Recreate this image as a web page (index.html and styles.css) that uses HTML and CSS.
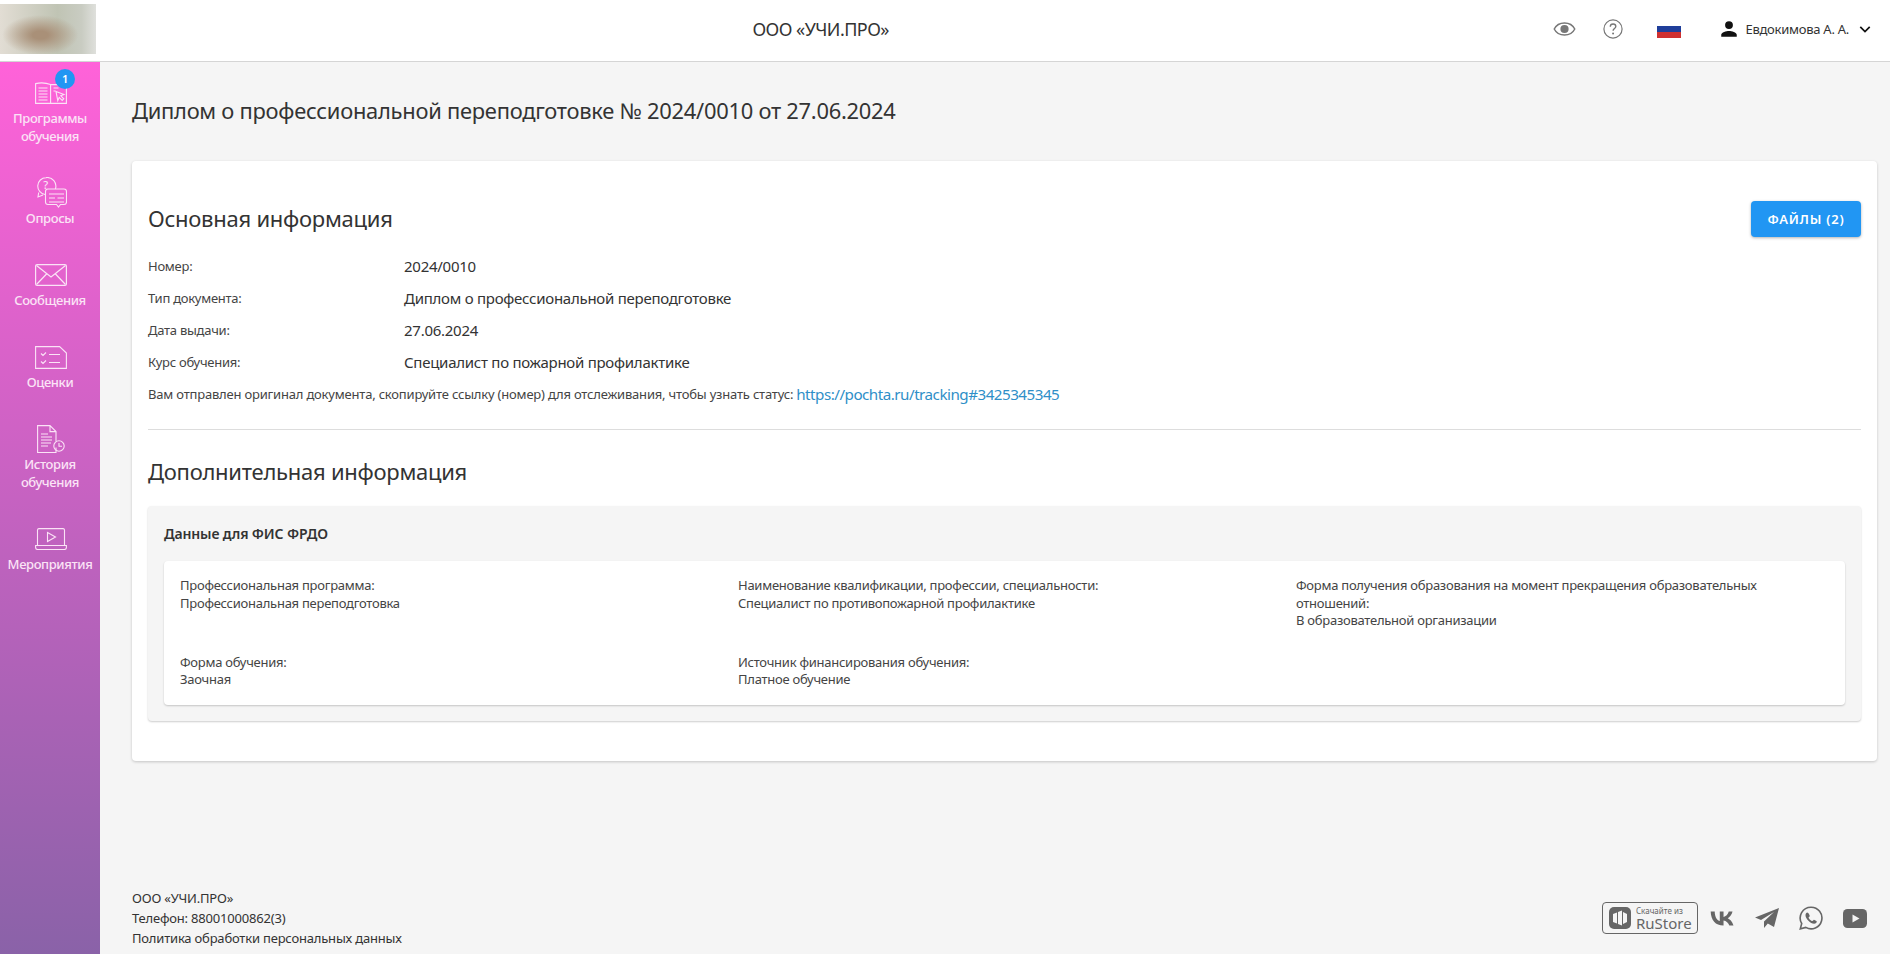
FILE: index.html
```html
<!DOCTYPE html>
<html lang="ru">
<head>
    <meta charset="UTF-8">
    <title>Диплом о профессиональной переподготовке</title>
    <link rel="stylesheet" href="styles.css">
</head>
<body>
    <header class="topbar">
        <div class="logo"></div>
        <div class="org-name">ООО «УЧИ.ПРО»</div>
        <div class="top-actions">
            <svg class="top-eye" viewBox="0 0 24 15" width="23" height="14"><path d="M12 1C7 1 3 3.500 1 7.500c2 4 6 6.500 11 6.500s9-2.500 11-6.500C21 3.500 17 1 12 1z" fill="none" stroke="#777" stroke-width="1.600"/><circle cx="12" cy="7.500" r="4.400" fill="#777"/></svg>
            <svg class="top-help" viewBox="0 0 22 22" width="20" height="20"><circle cx="11" cy="11" r="10" fill="none" stroke="#777" stroke-width="1.300"/><path d="M8 8.500c0-1.800 1.400-3 3.100-3s3 1.100 3 2.700c0 2.300-3 2.400-3 4.800" fill="none" stroke="#777" stroke-width="1.500"/><circle cx="11.100" cy="15.900" r="1.100" fill="#777"/></svg>
            <div class="flag"><span class="flag-white"></span><span class="flag-blue"></span><span class="flag-red"></span></div>
            <div class="user">
                <svg viewBox="0 0 24 24" width="20" height="20"><path d="M12 12a4.700 4.700 0 1 0 0-9.400 4.700 4.700 0 0 0 0 9.400zm0 2.300c-3.200 0-9.300 1.600-9.300 4.700v2.400h18.600V19c0-3.100-6.100-4.700-9.300-4.700z" fill="#111"/></svg>
                <span>Евдокимова А. А.</span>
                <svg viewBox="0 0 14 10" width="12" height="9"><path d="M1.500 2l5.500 5.500L12.500 2" fill="none" stroke="#111" stroke-width="2"/></svg>
            </div>
        </div>
    </header>

    <div class="layout">
        <nav class="sidebar">
            <a class="nav-item">
                <span class="nav-icon">
                    <svg viewBox="0 0 32 22" width="32" height="22"><g fill="none" stroke="#fbe3f6" stroke-width="1.100"><path d="M.6 1.600c5-1.200 10-1 15 1V21.400H.6zM15.600 2.600h15.800v18.800H15.600z"/><path d="M3.500 6h9M3.500 9h9M3.500 12h9M3.500 15h9M3.500 18h9M18.500 6h5M18.500 9h2"/><path d="M21 9.500l8 3-3.200 1.300 3 3-1.600 1.600-3-3-1.400 3.200z"/></g></svg>
                    <b class="badge">1</b>
                </span>
                <span>Программы<br>обучения</span>
            </a>
            <a class="nav-item">
                <span class="nav-icon">
                    <svg viewBox="0 0 32 32" width="32" height="32"><g fill="none" stroke="#fbe3f6" stroke-width="1.100"><path d="M10 17.500A8.500 8.500 0 0 1 11 .6a8.700 8.700 0 0 1 9.400 11.400M3.700 15.500l-.7 4.500 5-2"/><path d="M13 12h16a2.500 2.500 0 0 1 2.500 2.500V25a2.500 2.500 0 0 1-2.500 2.500h-3.500L23.500 30l-2-2.500H13a2.500 2.500 0 0 1-2.500-2.500V14.500A2.500 2.500 0 0 1 13 12z"/><path d="M14 17h15M14 21h6M22.500 21H29M14 25h15"/></g><text x="10.500" y="12" class="qmark">?</text></svg>
                </span>
                <span>Опросы</span>
            </a>
            <a class="nav-item">
                <span class="nav-icon">
                    <svg viewBox="0 0 32 22" width="32" height="22"><g fill="none" stroke="#fbe3f6" stroke-width="1.200"><rect x=".6" y=".6" width="30.800" height="20.800" rx="1.500"/><path d="M1.500 1.500L16 13 30.500 1.500M1.500 20.500l10-10.500M30.500 20.500L20.500 10"/></g></svg>
                </span>
                <span>Сообщения</span>
            </a>
            <a class="nav-item">
                <span class="nav-icon">
                    <svg viewBox="0 0 32 23" width="32" height="23"><g fill="none" stroke="#fbe3f6" stroke-width="1.100"><path d="M.6.6h24l6.800 6.400v15.400H.6z"/><path d="M6 7.500l2 2 3-3M6 15.500l2 2 3-3M14 8.500h11M14 16.500h11"/></g></svg>
                </span>
                <span>Оценки</span>
            </a>
            <a class="nav-item">
                <span class="nav-icon">
                    <svg viewBox="0 0 28 28" width="28" height="28"><g fill="none" stroke="#fbe3f6" stroke-width="1.100"><path d="M19 22.500v5H.6V.6h12.400l6 6v10M13 .6v6h6"/><path d="M4 9h7M4 12h11M4 15h11M4 18h10M4 21h7"/><circle cx="22" cy="21" r="5.200"/><path d="M22 18v3.200h3"/></g></svg>
                </span>
                <span>История<br>обучения</span>
            </a>
            <a class="nav-item">
                <span class="nav-icon">
                    <svg viewBox="0 0 32 22" width="32" height="22"><g fill="none" stroke="#fbe3f6" stroke-width="1.100"><path d="M2.500 17V2A1.500 1.500 0 0 1 4 .6h24A1.500 1.500 0 0 1 29.500 2v15"/><path d="M.6 17.500h30.800v2a2 2 0 0 1-2 2H2.600a2 2 0 0 1-2-2z"/><path d="M12.500 4.500l8 4.500-8 4.500z"/></g></svg>
                </span>
                <span>Мероприятия</span>
            </a>
        </nav>

        <main class="content">
            <h1 class="page-title">Диплом о профессиональной переподготовке № 2024/0010 от 27.06.2024</h1>

            <section class="card">
                <div class="card-head">
                    <h2>Основная информация</h2>
                    <button class="files-btn">ФАЙЛЫ (2)</button>
                </div>
                <div class="info-row"><span class="info-label">Номер:</span><span class="info-value">2024/0010</span></div>
                <div class="info-row"><span class="info-label">Тип документа:</span><span class="info-value">Диплом о профессиональной переподготовке</span></div>
                <div class="info-row"><span class="info-label">Дата выдачи:</span><span class="info-value">27.06.2024</span></div>
                <div class="info-row"><span class="info-label">Курс обучения:</span><span class="info-value">Специалист по пожарной профилактике</span></div>
                <div class="info-row"><span class="info-label info-long">Вам отправлен оригинал документа, скопируйте ссылку (номер) для отслеживания, чтобы узнать статус:</span><a class="track-link">https://pochta.ru/tracking#3425345345</a></div>
                <hr class="divider">
                <h2 class="extra-title">Дополнительная информация</h2>

                <div class="panel">
                    <h3>Данные для ФИС ФРДО</h3>
                    <div class="panel-grid">
                        <div class="field">Профессиональная программа:<br>Профессиональная переподготовка</div>
                        <div class="field">Наименование квалификации, профессии, специальности:<br>Специалист по противопожарной профилактике</div>
                        <div class="field">Форма получения образования на момент прекращения образовательных отношений:<br>В образовательной организации</div>
                        <div class="field">Форма обучения:<br>Заочная</div>
                        <div class="field">Источник финансирования обучения:<br>Платное обучение</div>
                    </div>
                </div>
            </section>

            <footer class="footer">
                <div class="footer-text">
                    <div>ООО «УЧИ.ПРО»</div>
                    <div>Телефон: 88001000862(3)</div>
                    <div>Политика обработки персональных данных</div>
                </div>
                <div class="socials">
                    <div class="rustore">
                        <svg viewBox="0 0 22 22" width="22" height="22"><rect width="22" height="22" rx="5" fill="#666"/><path d="M4 7l4-1.500v11L4 15zM9 5l4-1.500v15L9 17zM14 5l4 2v8l-4 2z" fill="#f5f5f5"/></svg>
                        <div class="rustore-text"><small>Скачайте из</small><span>RuStore</span></div>
                    </div>
                    <svg viewBox="0 0 26 16" width="25" height="15"><path d="M14 15.500C5.500 15.500.6 9.700.4.500h4.300c.1 6.700 3.100 9.600 5.400 10.200V.5h4v5.800c2.300-.3 4.800-2.900 5.600-5.800h4c-.7 3.600-3.300 6.200-5.100 7.300 1.900.9 4.900 3.200 6.100 7.700h-4.400c-.9-2.900-3.300-5.200-6.200-5.500v5.500z" fill="#666"/></svg>
                    <svg viewBox="0 0 24 20" width="24" height="20"><path d="M24 0L0 9.500l6 2.500L19 4 9 13.500V20l3.800-4.500 6.200 3.500z" fill="#666"/></svg>
                    <svg viewBox="0 0 24 24" width="24" height="24"><path d="M12 1.200A10.800 10.800 0 0 0 2.700 17.500L1.300 22.800l5.500-1.400A10.800 10.800 0 1 0 12 1.200z" fill="none" stroke="#666" stroke-width="1.600"/><path d="M8.200 6.500c-.6 0-1.700 1-1.700 2.700 0 3.600 5 8.500 8.600 8.500 1.700 0 2.700-1.200 2.700-2.100 0-.5-2.500-1.800-2.900-1.800-.4 0-1 1.300-1.500 1.300-1.100 0-3.800-2.600-3.800-3.700 0-.5 1.200-1 1.200-1.500 0-.4-1.200-3.400-2.600-3.400z" fill="#666"/></svg>
                    <svg viewBox="0 0 24 19" width="24" height="19"><rect width="24" height="19" rx="4.500" fill="#666"/><path d="M9.500 5.500l7 4-7 4z" fill="#f5f5f5"/></svg>
                </div>
            </footer>
        </main>
    </div>
</body>
</html>
```

FILE: styles.css
```css
* {
    box-sizing: border-box;
}

html, body {
    height: 100%;
}

body {
    margin: 0;
    display: flex;
    flex-direction: column;
    overflow: hidden;
    background-color: #f5f5f5;
    color: #333;
    font-family: "Noto Sans", sans-serif;
    font-size: 13px;
    letter-spacing: -0.02em;
}

/* Top bar */
.topbar {
    display: flex;
    align-items: flex-start;
    height: 62px;
    flex-shrink: 0;
    background-color: #fff;
    border-bottom: 1px solid #d5d5d5;
}

.logo {
    width: 96px;
    height: 50px;
    margin-top: 4px;
    flex-shrink: 0;
    background: radial-gradient(ellipse 38px 20px at 42% 62%, #a99078 20%, rgba(169, 144, 120, 0) 100%),
        linear-gradient(90deg, #e2ddd4, #c0c4b4 60%, #c9ccc2 85%, #dfe0dc);
}

.org-name {
    flex: 1;
    height: 58px;
    margin-right: 8px;
    color: #333;
    font-size: 18px;
    line-height: 58px;
    letter-spacing: -0.03em;
    text-align: center;
}

.top-actions {
    display: flex;
    align-items: center;
    height: 58px;
    padding-right: 19px;
}

.top-eye {
    margin-right: 27px;
}

.top-help {
    margin-right: 34px;
}

.flag {
    display: flex;
    flex-direction: column;
    width: 24px;
    margin-right: 38px;
}

.flag span {
    height: 6px;
}

.flag-white {
    background-color: #fff;
}

.flag-blue {
    background-color: #1f3e9a;
}

.flag-red {
    background-color: #cf3030;
}

.user {
    display: flex;
    align-items: center;
    gap: 6px;
    font-size: 13px;
}

.user svg:last-child {
    margin-left: 4px;
}

/* Layout */
.layout {
    flex: 1;
    display: flex;
    min-height: 0;
}

.sidebar {
    width: 100px;
    flex-shrink: 0;
    display: flex;
    flex-direction: column;
    padding-top: 15px;
    background: linear-gradient(180deg, #ff62d9 0%, #8a62a8 100%);
}

.nav-item {
    display: flex;
    flex-direction: column;
    align-items: center;
    margin-bottom: 32px;
    color: #fbe3f6;
    font-size: 13px;
    line-height: 18px;
    font-weight: 500;
    letter-spacing: -0.03em;
    text-align: center;
}

.nav-icon {
    position: relative;
    display: flex;
    align-items: center;
    justify-content: center;
    width: 32px;
    height: 32px;
    margin-left: 2px;
}

.badge {
    position: absolute;
    top: -8px;
    right: -8px;
    width: 20px;
    height: 20px;
    border-radius: 50%;
    background-color: #2196f3;
    color: #fff;
    font-size: 11px;
    line-height: 20px;
    font-weight: 600;
}

.qmark {
    fill: #fbe3f6;
    font-size: 11px;
    text-anchor: middle;
}

/* Content */
.content {
    flex: 1;
    min-width: 0;
    display: flex;
    flex-direction: column;
    padding: 0 13px 0 32px;
}

.page-title {
    margin: 31px 0 32px;
    font-size: 21.9px;
    line-height: 36px;
    font-weight: 400;
}

.card {
    padding: 34px 16px 40px;
    background-color: #fff;
    border-radius: 4px;
    box-shadow: 0 1px 3px rgba(0, 0, 0, .2);
}

.card-head {
    display: flex;
    align-items: center;
    justify-content: space-between;
    height: 50px;
    margin-bottom: 5px;
}

.card h2 {
    margin: 0 0 4px;
    font-size: 22px;
    font-weight: 400;
}

.files-btn {
    width: 110px;
    height: 36px;
    margin-bottom: 2px;
    border: none;
    border-radius: 4px;
    background-color: #2196f3;
    color: #fff;
    font-family: inherit;
    font-size: 13px;
    font-weight: 600;
    letter-spacing: .06em;
    box-shadow: 0 1px 3px rgba(0, 0, 0, .3);
}

.info-row {
    display: flex;
    align-items: center;
    height: 32px;
}

.info-label {
    width: 256px;
    flex-shrink: 0;
    color: #444;
}

.info-long {
    width: auto;
    margin-right: 3px;
    letter-spacing: -0.015em;
}

.info-value {
    font-size: 15px;
}

.track-link {
    color: #2f8fc8;
    font-size: 15.2px;
    letter-spacing: -0.033em;
}

.divider {
    margin: 19px 0 0;
    border: none;
    border-top: 1px solid #ddd;
}

.card h2.extra-title {
    margin: 26px 0 20px;
    line-height: 30px;
}

.panel {
    padding: 16px;
    background-color: #f5f5f5;
    border-radius: 4px;
    box-shadow: 0 1px 2px rgba(0, 0, 0, .2);
}

.panel h3 {
    margin: 0 0 15px;
    font-size: 14px;
    line-height: 24px;
    font-weight: 600;
    letter-spacing: -0.01em;
}

.panel-grid {
    display: grid;
    grid-template-columns: repeat(3, 558px);
    row-gap: 24px;
    padding: 16px;
    background-color: #fff;
    border-radius: 4px;
    box-shadow: 0 1px 2px rgba(0, 0, 0, .2);
}

.field {
    padding-right: 60px;
    color: #444;
    line-height: 17.5px;
}

/* Footer */
.footer {
    display: flex;
    justify-content: space-between;
    align-items: center;
    margin-top: auto;
    padding-bottom: 6px;
}

.footer-text {
    line-height: 20px;
    letter-spacing: -0.015em;
}

.socials {
    display: flex;
    align-items: center;
    gap: 20px;
    padding-right: 10px;
}

.rustore {
    display: flex;
    align-items: center;
    gap: 5px;
    width: 96px;
    height: 32px;
    margin-right: -8px;
    padding-left: 6px;
    border: 1px solid #666;
    border-radius: 4px;
}

.rustore-text {
    display: flex;
    flex-direction: column;
    color: #666;
    font-size: 15px;
    line-height: 15px;
    letter-spacing: 0;
}

.rustore-text small {
    font-size: 8px;
    line-height: 10px;
}
```
